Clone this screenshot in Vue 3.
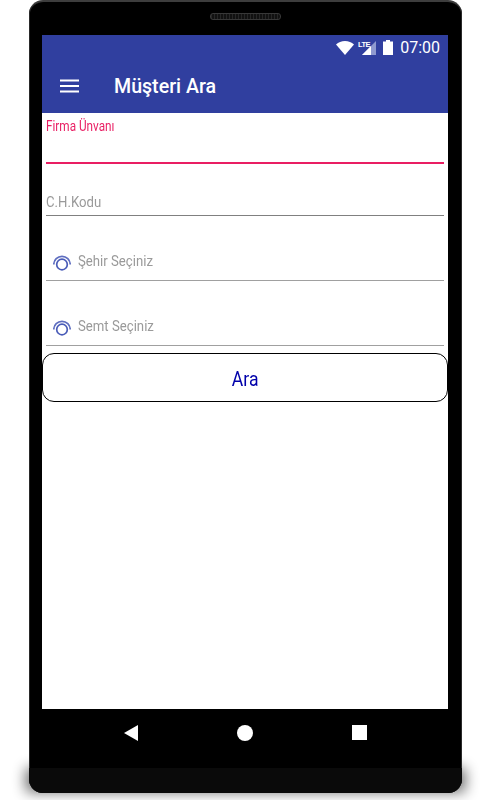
<script setup>
const fields = [
  { label: 'Şehir Seçiniz' },
  { label: 'Semt Seçiniz' }
]
</script>

<template>
  <div class="page">
    <div class="device">
      <div class="shadow"></div>
      <div class="body">
        <div class="top-bezel"><div class="speaker"></div></div>
        <div class="screen">
          <div class="status">
            <svg class="wifi" width="18" height="14" viewBox="0 0 18 14"><path d="M0 3.600C2.400 1.400 5.500 0 9 0s6.600 1.400 9 3.600L9 14z" fill="#fff"/></svg>
            <svg class="signal" width="18" height="16" viewBox="0 0 18 16">
              <path d="M18 1v14H4z" fill="#8f9ad0"/>
              <path d="M13 6v9H4z" fill="#fff"/>
              <text x="0" y="7" class="lte">LTE</text>
            </svg>
            <svg class="battery" width="10" height="15" viewBox="0 0 10 15"><path d="M3 0h4v1.500h3V15H0V1.500h3z" fill="#fff"/></svg>
            <span class="time">07:00</span>
          </div>
          <div class="toolbar">
            <svg width="19" height="14" viewBox="0 0 19 14" class="menu"><path d="M0 1.500h19M0 7h19M0 12.500h19" stroke="#fff" stroke-width="1.800"/></svg>
            <span class="title">Müşteri Ara</span>
          </div>
          <div class="content">
            <div class="input active">
              <span class="float">Firma Ünvanı</span>
            </div>
            <div class="input code">
              <span class="hint">C.H.Kodu</span>
            </div>
            <div v-for="f in fields" :key="f.label" class="input picker">
              <svg width="18" height="18" viewBox="0 0 18 18" class="pick-icon">
                <circle cx="9" cy="10.500" r="5.300" fill="none" stroke="#4a5cb8" stroke-width="1.700"/>
                <path d="M.8 10.500A8.200 8.200 0 0 1 17.200 10.500" fill="none" stroke="#5f6ec0" stroke-width="1.700"/>
              </svg>
              <span class="hint">{{ f.label }}</span>
            </div>
            <button class="search"><span>Ara</span></button>
          </div>
        </div>
        <div class="nav">
          <svg width="14" height="16" viewBox="0 0 14 16"><path d="M0 8 14 0v16z" fill="#fff"/></svg>
          <svg width="16" height="16" viewBox="0 0 16 16"><circle cx="8" cy="8" r="8" fill="#fff"/></svg>
          <svg width="15" height="15" viewBox="0 0 15 15"><rect width="15" height="15" fill="#fff"/></svg>
        </div>
        <div class="chin"></div>
      </div>
    </div>
  </div>
</template>

<style>
html, body { margin: 0; background: #fff; overflow: hidden; }
</style>

<style scoped>
.page {
  width: 490px;
  height: 800px;
  padding-left: 29px;
  box-sizing: border-box;
  overflow: hidden;
  font-family: Roboto, sans-serif;
  background: #fff;
}
.device {
  position: relative;
  width: 433px;
  height: 793px;
}
.shadow {
  position: absolute;
  left: -3px;
  right: -3px;
  top: 768px;
  height: 24px;
  background: #000;
  opacity: .6;
  filter: blur(7px);
}
.body {
  position: relative;
  height: 100%;
  box-sizing: border-box;
  background: #000;
  border-radius: 14px;
  border-top: 2px solid #3d3d3d;
  display: flex;
  flex-direction: column;
  overflow: hidden;
  box-shadow: inset 1px 0 0 #2a2a2a, inset -1px 0 0 #2a2a2a;
}
.top-bezel {
  height: 33px;
  display: flex;
  justify-content: center;
  padding-top: 11px;
  box-sizing: border-box;
}
.speaker {
  width: 69px;
  height: 5px;
  border-radius: 3px;
  background: repeating-linear-gradient(90deg, #262626 0 1px, #111 1px 3px);
  border: 1px solid #383838;
}
.screen {
  margin: 0 14px 0 13px;
  height: 674px;
  background: #fff;
  display: flex;
  flex-direction: column;
}
.status {
  height: 25px;
  background: #303f9f;
  display: flex;
  align-items: center;
  justify-content: flex-end;
  padding-right: 8px;
  color: #fff;
}
.wifi { margin-right: 4px; margin-top: 1px; }
.signal { margin-right: 7px; }
.lte { font: 700 7.500px "Liberation Sans Narrow", "Liberation Sans", sans-serif; fill: #fff; letter-spacing: -.6px; }
.battery { margin-right: 7px; }
.time { font-size: 16px; font-weight: 400; }
.toolbar {
  height: 53px;
  background: #303f9f;
  display: flex;
  align-items: center;
  padding-left: 18px;
  box-sizing: border-box;
  padding-bottom: 1px;
}
.menu { margin-right: 35px; }
.title {
  color: #fff;
  font-size: 19.600px;
  font-weight: 500;
}
.content {
  padding: 0 4px;
  display: flex;
  flex-direction: column;
}
.input {
  border-bottom: 1px solid #808080;
  display: flex;
  box-sizing: border-box;
}
.active {
  height: 51px;
  border-bottom: 2px solid #e91e63;
  padding-top: 6px;
}
.float {
  color: #e91e63;
  font-size: 14px;
  line-height: 15px;
  transform: scaleX(.84);
  transform-origin: left;
  white-space: nowrap;
}
.code {
  height: 52px;
  align-items: flex-end;
  padding-bottom: 4px;
}
.hint {
  color: #9a9a9a;
  font-size: 15.500px;
  line-height: 18px;
  transform: scaleX(.85);
  transform-origin: left;
  white-space: nowrap;
}
.picker {
  height: 65px;
  align-items: flex-end;
  padding-bottom: 10px;
  border-bottom-color: #a0a0a0;
}
.picker + .picker { height: 64.500px; }
.pick-icon {
  margin: 0 7px 0 7px;
  position: relative;
  top: 2px;
}
.search {
  margin: 7.500px -4px 0;
  height: 49px;
  border: 1px solid #000;
  border-radius: 12px;
  background: #fff;
  color: #0000aa;
  font-family: Roboto, sans-serif;
  font-size: 20px;
  padding: 2px 0 0;
}
.search span {
  display: inline-block;
  transform: scaleX(.88);
}
.nav {
  height: 47px;
  display: flex;
  align-items: center;
  padding: 0 95px;
  justify-content: space-between;
}
.chin {
  flex: 1;
  margin-top: 12px;
  background: #0a0a0a;
}
</style>
